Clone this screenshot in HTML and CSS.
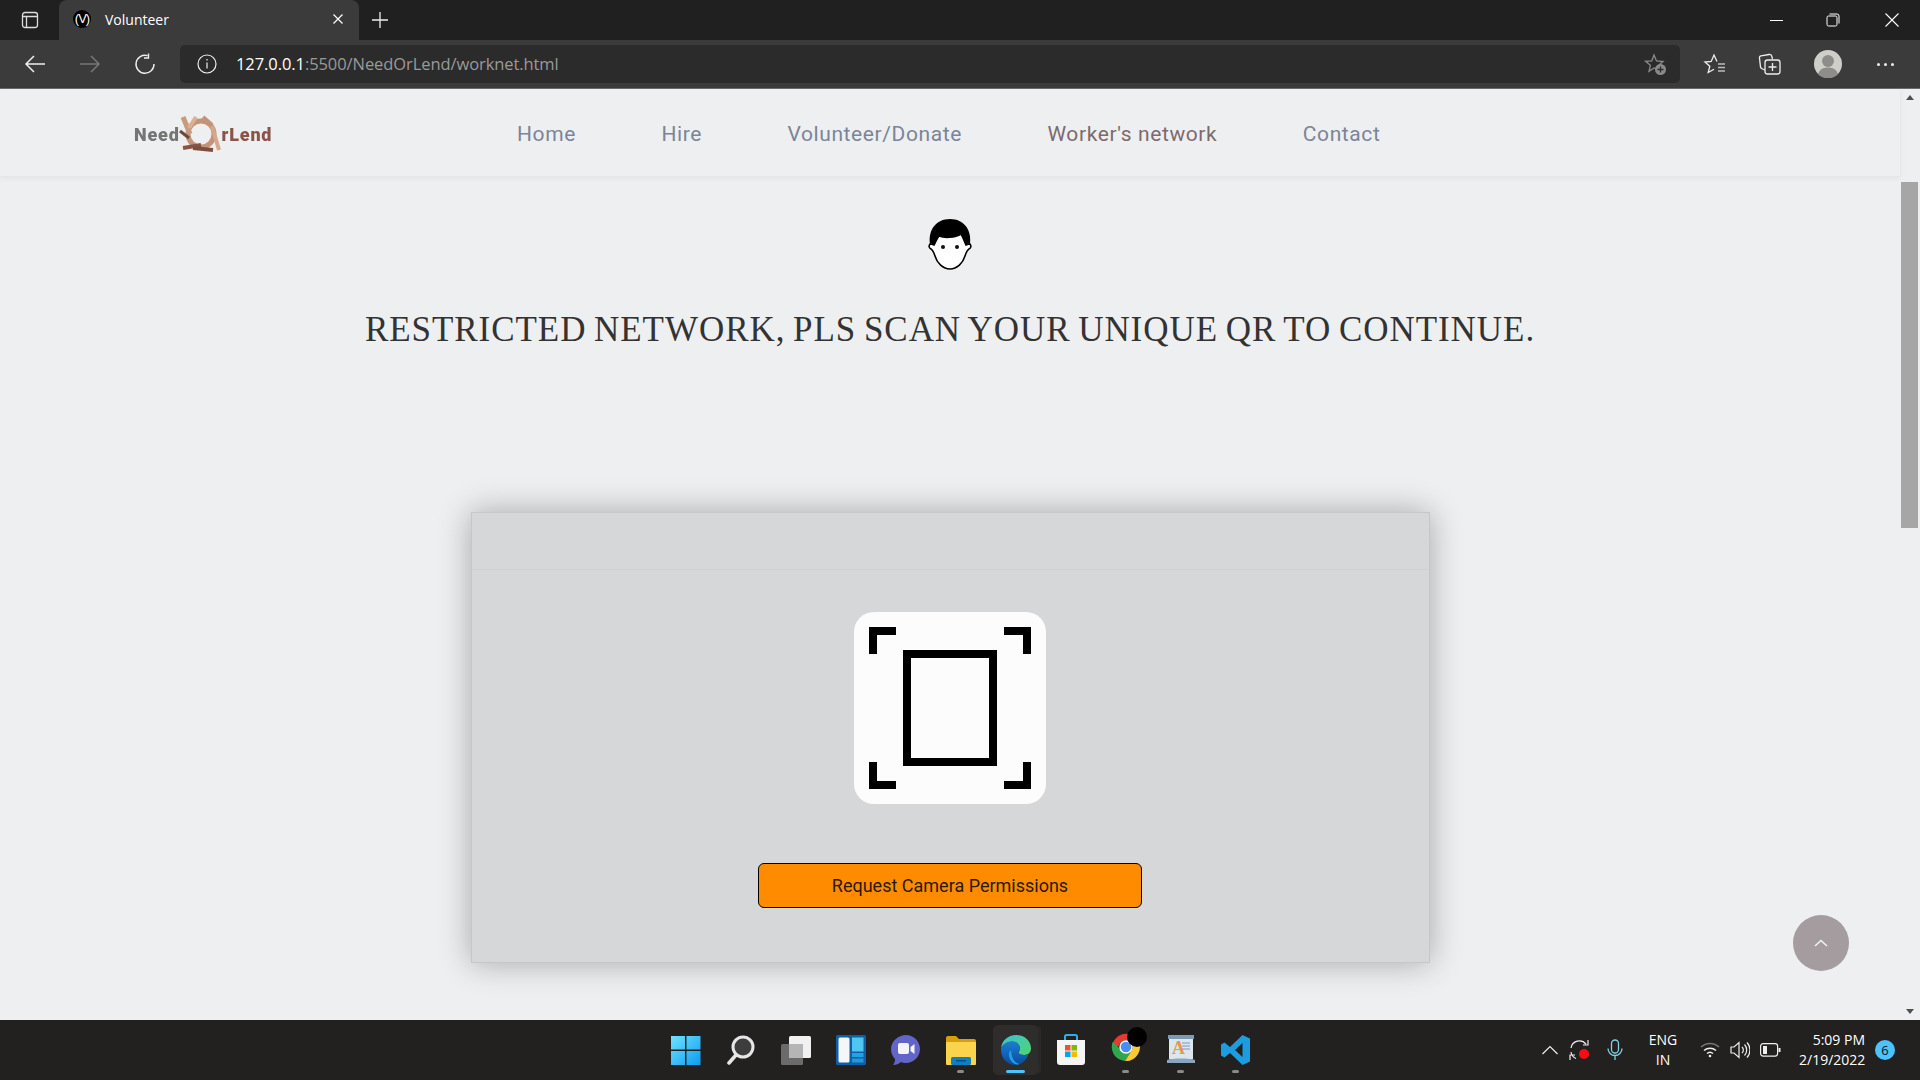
FILE: index.html
```html
<!DOCTYPE html>
<html lang="en">
<head>
  <meta charset="UTF-8">
  <title>Volunteer</title>
  <link rel="stylesheet" href="styles.css">
</head>
<body>

<!-- browser frame -->
<div class="tabstrip">
  <div class="tab-side">
    <svg width="18" height="18" viewBox="0 0 18 18" fill="none" stroke="#ddd" stroke-width="1.3"><rect x="1.5" y="1.5" width="15" height="15" rx="2.5"/><path d="M1.5 5.5h15M5.5 5.5v11"/></svg>
  </div>
  <div class="tab">
    <span class="favicon">(V)</span>
    <span class="tab-title">Volunteer</span>
    <svg class="tab-close" width="12" height="12" viewBox="0 0 12 12" stroke="#fff" stroke-width="1.2"><path d="M1.5 1.5l9 9M10.5 1.5l-9 9"/></svg>
  </div>
  <div class="tab-new">
    <svg width="18" height="18" viewBox="0 0 18 18" stroke="#eee" stroke-width="1.3"><path d="M9 1v16M1 9h16"/></svg>
  </div>
  <div class="win-controls">
    <svg width="14" height="14" viewBox="0 0 14 14" stroke="#fff" stroke-width="1"><path d="M0 7.5h13"/></svg>
    <svg width="14" height="14" viewBox="0 0 14 14" fill="none" stroke="#fff" stroke-width="1"><rect x="1" y="3" width="10" height="10" rx="1.5"/><path d="M3.5 1h7.5a2 2 0 0 1 2 2v7.5"/></svg>
    <svg width="14" height="14" viewBox="0 0 14 14" stroke="#fff" stroke-width="1.1"><path d="M.5.5l13 13M13.500.5l-13 13"/></svg>
  </div>
</div>

<div class="toolbar">
  <div class="tool-btn"><svg width="22" height="20" viewBox="0 0 22 20" fill="none" stroke="#eee" stroke-width="1.5"><path d="M21 10H2M10 2l-8 8 8 8"/></svg></div>
  <div class="tool-btn"><svg width="22" height="20" viewBox="0 0 22 20" fill="none" stroke="#777" stroke-width="1.5"><path d="M1 10h19M12 2l8 8-8 8"/></svg></div>
  <div class="tool-btn"><svg width="22" height="22" viewBox="0 0 22 22" fill="none" stroke="#eee" stroke-width="1.4"><path d="M13.500 2.600A9 9 0 1 0 20 11M14.500 .5v4.500h-4.500"/></svg></div>
  <div class="address">
    <svg class="info" width="20" height="20" viewBox="0 0 20 20" fill="none" stroke="#eee" stroke-width="1.2"><circle cx="10" cy="10" r="9"/><path d="M10 8.500v6M10 5v1.600"/></svg>
    <span class="url"><b>127.0.0.1</b>:5500/NeedOrLend/worknet.html</span>
    <svg class="fav-add" width="24" height="24" viewBox="0 0 24 24"><path d="M11 3l2.500 6 6.500.5-4.900 4.200 1.300 5-5.400-2.700-5 3.300 1.400-6-4.900-4 6.300-.5z" fill="none" stroke="#8a8a8a" stroke-width="1.3"/><circle cx="17.500" cy="17.500" r="5.500" fill="#8a8a8a"/><path d="M17.500 14.500v6M14.500 17.500h6" stroke="#2b2b2b" stroke-width="1.3"/></svg>
  </div>
  <div class="tool-btn tool-favs"><svg width="24" height="24" viewBox="0 0 24 24" fill="none" stroke="#eee" stroke-width="1.3"><path d="M14 9.500L11 3 8.200 9.500 2 10l4.800 4.200-1.600 6.300 5.800-3.300"/><path d="M15 12h7M15 15.500h7M15 19h7" stroke="#bbb"/></svg></div>
  <div class="tool-btn"><svg width="24" height="24" viewBox="0 0 24 24" fill="none" stroke="#eee" stroke-width="1.3"><path d="M7 18l-2.500-1c-1-.4-1.700-1-2-2L1.500 6c-.2-1 .3-2 1.500-2.200L11 2.500c1.500-.2 2.300.4 2.700 1.500l.8 3"/><rect x="7" y="8" width="15" height="14" rx="2.500"/><path d="M14.500 11v8M10.500 15h8"/></svg></div>
  <div class="tool-btn tool-profile">
    <svg width="28" height="28" viewBox="0 0 28 28"><circle cx="14" cy="14" r="14" fill="#cfcfca"/><circle cx="14" cy="11" r="6" fill="#8f8d8a"/><path d="M4 24c1.500-4.500 5-6.500 10-6.500s8.500 2 10 6.500a14 14 0 0 1-20 0z" fill="#8f8d8a"/></svg>
  </div>
  <div class="tool-btn tool-more"><i></i><i></i><i></i></div>
</div>

<div class="viewport">
  <div class="page">
    <header class="nav">
      <div class="logo">
        <span class="logo-need">Need</span>
        <svg class="logo-ring" width="46" height="40" viewBox="0 0 46 40" fill="none">
          <circle cx="22" cy="20" r="13" stroke="#c49478" stroke-width="5"/>
          <path d="M4 3l7 17" stroke="#c99a7c" stroke-width="5"/>
          <path d="M1 17l9 7" stroke="#6d4a3a" stroke-width="3"/>
          <path d="M17 3l-7 11" stroke="#d9b296" stroke-width="4"/>
          <path d="M24 3l9 8" stroke="#c49478" stroke-width="4"/>
          <path d="M33 12l7 24" stroke="#d3a88c" stroke-width="4"/>
          <path d="M4 34l18-3" stroke="#8a5443" stroke-width="4"/>
          <path d="M14 34l20 2" stroke="#7e4f40" stroke-width="4"/>
        </svg>
        <span class="logo-lend">rLend</span>
      </div>
      <nav class="nav-links">
        <a>Home</a>
        <a>Hire</a>
        <a>Volunteer/Donate</a>
        <a class="current">Worker's network</a>
        <a>Contact</a>
      </nav>
    </header>

    <svg class="face" width="46" height="52" viewBox="1 0 44 52">
      <path d="M4 31c-2-1-2.500-3-1-5 2 0 3 .5 4 1 2-3 3-7 5-9 5 2 16 2 22-2 2 3 3 7 5 11 1-.5 2-1 4-1 1.500 2 1 4-1 5-2 1-3 4-4 7-2 7-8 13-15 13S10 45 8 38c-1-3-2-6-4-7z" fill="#fff" stroke="#000" stroke-width="1.600"/>
      <path d="M3 26C1 12 9 1 23 1s22 11 20 25c-2-.5-3 0-4 1-2-4-3-8-5-11-6 4-17 4-22 2-2 2-3 6-5 9-1-.5-2-1.500-4-1z" fill="#000"/>
      <circle cx="16" cy="29" r="2" fill="#111"/><circle cx="30" cy="29" r="2" fill="#111"/>
    </svg>

    <h2 class="notice">RESTRICTED NETWORK, PLS SCAN YOUR UNIQUE QR TO CONTINUE.</h2>

    <section class="scanner">
      <div class="scanner-head"></div>
      <div class="scanner-body">
        <div class="scan-tile">
          <svg width="192" height="192" viewBox="0 0 192 192" fill="none" stroke="#000" stroke-width="8">
            <path d="M19 42V19h23M150 19h23v23M19 150v23h23M150 173h23v-23"/>
            <rect x="53" y="42" width="86" height="108"/>
          </svg>
        </div>
        <button class="scan-btn">Request Camera Permissions</button>
      </div>
    </section>

    <div class="to-top">
      <svg width="14" height="8" viewBox="0 0 14 8" fill="none" stroke="#eef1f5" stroke-width="1.600"><path d="M1 7l6-5.500L13 7"/></svg>
    </div>
  </div>

  <div class="scrollbar">
    <div class="arrow arrow-up"></div>
    <div class="thumb"></div>
    <div class="arrow arrow-down"></div>
  </div>
</div>

<!-- windows taskbar -->
<footer class="taskbar">
  <div class="task-icons">
    <div class="task-item">
      <svg width="30" height="30" viewBox="0 0 30 30"><defs><linearGradient id="win" x1="0" y1="0" x2="1" y2="1"><stop offset="0" stop-color="#6fe3ff"/><stop offset="1" stop-color="#0c9bf0"/></linearGradient></defs><path d="M0 1h14v13.500H0zM15.500 1H29.500v13.500H15.500zM0 16h14v14H0zM15.500 16H29.500v14H15.500z" fill="url(#win)"/></svg>
    </div>
    <div class="task-item">
      <svg width="30" height="30" viewBox="0 0 30 30" fill="none"><circle cx="17" cy="12" r="10" fill="#3d3d3d" stroke="#e6e6e6" stroke-width="3"/><path d="M10 20l-7 8" stroke="#e6e6e6" stroke-width="3.500" stroke-linecap="round"/></svg>
    </div>
    <div class="task-item">
      <svg width="30" height="30" viewBox="0 0 30 30"><rect x="8" y="1" width="22" height="22" rx="1.500" fill="#f1f1f1"/><rect x="0" y="9" width="22" height="21" rx="1.500" fill="#6b6b6b"/><rect x="8" y="9" width="14" height="14" fill="#b5b5b5"/></svg>
    </div>
    <div class="task-item">
      <svg width="30" height="30" viewBox="0 0 30 30"><rect width="30" height="30" rx="1.500" fill="#0e5fa8"/><rect x="2.500" y="2.500" width="11" height="25" rx="1.500" fill="#f4f6f8"/><rect x="16" y="2.500" width="11.500" height="14" fill="#4fc6f0"/><rect x="16" y="18" width="11.500" height="4" fill="#22a4e2"/><rect x="16" y="23.500" width="11.500" height="4" fill="#1f9ad8"/></svg>
    </div>
    <div class="task-item">
      <svg width="30" height="32" viewBox="0 0 30 32"><path d="M15 1c8 0 14 6.500 14 14S23 29 15 29c-2 0-3.500-.3-5-1-2 2-5 3-8 3 1.500-2 2.200-4 2-6-2.500-2.500-4-6-4-10C0 7.500 7 1 15 1z" fill="#6264c7"/><rect x="7" y="9" width="11" height="11" rx="2" fill="#f4f3fb"/><path d="M19.500 13l4-3v10l-4-3z" fill="#f4f3fb"/></svg>
    </div>
    <div class="task-item has-dot">
      <svg width="30" height="30" viewBox="0 0 30 30"><path d="M0 3a2 2 0 0 1 2-2h8l3 3h15a2 2 0 0 1 2 2v3H0z" fill="#d99d0d"/><path d="M0 7h30v22a1 1 0 0 1-1 1H1a1 1 0 0 1-1-1z" fill="#fbd44e"/><rect x="5" y="22" width="20" height="8" rx="1.500" fill="#0f7fc4"/><rect x="10" y="25" width="10" height="1.500" fill="#0a4f80"/></svg>
    </div>
    <div class="task-item is-active">
      <svg width="30" height="30" viewBox="0 0 30 30"><defs><linearGradient id="edgeA" x1="0" y1="0" x2="1" y2="1"><stop offset="0" stop-color="#39c5d6"/><stop offset="1" stop-color="#52d36a"/></linearGradient><linearGradient id="edgeB" x1="0" y1="0" x2="0" y2="1"><stop offset="0" stop-color="#1b7fd4"/><stop offset="1" stop-color="#0a4a9c"/></linearGradient></defs><path d="M15 0c9 0 15 6 15 13.500 0 4.500-3.500 6.500-7 6.500-3 0-5.500-1-5.500-2.500 0-1 1.500-1.500 1.500-4C19 9.500 15.500 6.500 11 6.500 6 6.500 2 9.500 0 13 1 5.500 7 0 15 0z" fill="url(#edgeA)"/><path d="M0 13c2-3.500 6-6.500 11-6.500 4.500 0 8 3 8 7 0 2.500-1.500 3-1.500 4 0 1.500 2.500 2.500 5.500 2.500 1.500 0 3-.3 4.500-1-2 6-7 11-13 11C6 30 0 23 0 15z" fill="url(#edgeB)"/><path d="M10 15c-3 2-3 8 1 12 2 2 5 3 8 2-5-1-8-4-9-14z" fill="#1e9fe0"/></svg>
    </div>
    <div class="task-item">
      <svg width="30" height="32" viewBox="0 0 30 32"><path d="M9 6V2.500A1.500 1.500 0 0 1 10.500 1h9A1.500 1.500 0 0 1 21 2.500V6" fill="none" stroke="#2ab0e8" stroke-width="2"/><path d="M1 6h28v22a3 3 0 0 1-3 3H4a3 3 0 0 1-3-3z" fill="#f5f5f5"/><rect x="9" y="11" width="5.500" height="5.500" fill="#f25022"/><rect x="15.500" y="11" width="5.500" height="5.500" fill="#7fba00"/><rect x="9" y="17.500" width="5.500" height="5.500" fill="#00a4ef"/><rect x="15.500" y="17.500" width="5.500" height="5.500" fill="#ffb900"/></svg>
    </div>
    <div class="task-item has-dot">
      <svg class="chrome" width="36" height="38" viewBox="0 0 36 38"><path d="M1 21A14 14 0 0 1 27 13.500H15A7 7 0 0 0 8 19z" fill="#e33b2e"/><path d="M1.900 14.500A14 14 0 0 0 14 34l6-9.500A7 7 0 0 1 9 22z" fill="#2fa74b"/><path d="M14 34A14 14 0 0 0 27 13H15a7 7 0 0 1 5 11.500z" fill="#fcc934"/><circle cx="15" cy="20" r="6" fill="#4c8bf5" stroke="#fff" stroke-width="1.500"/><circle cx="26" cy="10" r="10" fill="#000"/></svg>
    </div>
    <div class="task-item has-dot">
      <svg width="30" height="30" viewBox="0 0 30 30"><path d="M3 1h24v23H3z" fill="#dce6ee"/><rect x="2" y="0" width="26" height="4" fill="#7a9ab5"/><path d="M1 25c4-2 24-2 28 0v3H1z" fill="#8aa5bd"/><text class="note-letter" x="6" y="19">A</text><path d="M16 8h8M16 11h8M16 14h8" stroke="#7a9ab5" stroke-width="1.200"/></svg>
    </div>
    <div class="task-item has-dot">
      <svg width="30" height="30" viewBox="0 0 30 30"><path d="M21.500 0L29 3.500v23L21.500 30 9 18l-5.500 4.500L0 20.500v-11L3.500 7.500 9 12zM21.500 8l-7.500 7 7.500 7z" fill="#1f9be0" fill-rule="evenodd"/></svg>
    </div>
  </div>

  <div class="tray">
    <svg class="tray-chevron" width="16" height="10" viewBox="0 0 16 10" fill="none" stroke="#eee" stroke-width="1.200"><path d="M.5 9L8 1.500 15.500 9"/></svg>
    <svg class="tray-sync" width="22" height="24" viewBox="0 0 22 24" fill="none" stroke="#eee" stroke-width="1.200"><path d="M2 10A8.500 8.500 0 0 1 17 6M19 2v5h-5M2 14a8.500 8.500 0 0 0 5 6.500M1 22v-5h5"/><circle cx="15" cy="16" r="5" fill="#ff0a14" stroke="none"/></svg>
    <svg class="tray-mic" width="16" height="22" viewBox="0 0 16 22" fill="none" stroke="#84cfe6" stroke-width="1.300"><rect x="4.500" y="1" width="7" height="13" rx="3.500"/><path d="M1 9.500a7 7 0 0 0 14 0M8 16.500V21"/></svg>
    <div class="tray-lang">ENG<br>IN</div>
    <svg class="tray-wifi" width="20" height="16" viewBox="0 0 20 16" fill="none" stroke="#eee" stroke-width="1.500"><path d="M1 5a13 13 0 0 1 18 0" stroke="#777"/><path d="M4 8.500a9 9 0 0 1 12 0M7 11.500a4.500 4.500 0 0 1 6 0"/><circle cx="10" cy="14" r="1.300" fill="#eee" stroke="none"/></svg>
    <svg class="tray-sound" width="20" height="18" viewBox="0 0 20 18" fill="none" stroke="#eee" stroke-width="1.200"><path d="M1 6v6h3l5 4.500v-15L4 6zM12 6a4 4 0 0 1 0 6M14.500 3.500a8 8 0 0 1 0 11M17 1.500a11 11 0 0 1 0 15"/></svg>
    <svg class="tray-battery" width="21" height="14" viewBox="0 0 21 14" fill="none" stroke="#eee" stroke-width="1.200"><rect x=".6" y=".6" width="17" height="12.500" rx="2.500"/><rect x="3" y="3" width="4" height="8" fill="#eee" stroke="none"/><path d="M19.500 5v4" stroke-width="2"/></svg>
    <div class="tray-clock">5:09 PM<br>2/19/2022</div>
    <div class="tray-badge">6</div>
  </div>
</footer>

</body>
</html>
```

FILE: styles.css
```css
* {
  box-sizing: border-box;
}

html, body {
  margin: 0;
  height: 1080px;
  overflow: hidden;
}

body {
  display: flex;
  flex-direction: column;
  font-family: "Open Sans", sans-serif;
  background: #eeeff1;
}

/* browser frame */
.tabstrip {
  height: 40px;
  background: #202020;
  display: flex;
  align-items: flex-end;
  flex: none;
}

.tab-side {
  width: 59px;
  height: 40px;
  display: flex;
  align-items: center;
  padding-left: 21px;
}

.tab {
  width: 300px;
  height: 40px;
  background: #3b3b3b;
  border-radius: 8px 8px 0 0;
  display: flex;
  align-items: center;
  padding: 0 0 2px 14px;
  color: #fff;
}

.favicon {
  width: 18px;
  height: 18px;
  border-radius: 50%;
  background: #000;
  color: #fff;
  font: 13px/18px "Liberation Sans", sans-serif;
  text-align: center;
  letter-spacing: -1px;
}

.tab-title {
  margin-left: 14px;
  font-size: 14px;
  flex: 1;
}

.tab-close {
  margin-right: 15px;
}

.tab-new {
  height: 40px;
  display: flex;
  align-items: center;
  padding-left: 12px;
}

.win-controls {
  height: 40px;
  margin-left: auto;
  display: flex;
  align-items: center;
  gap: 42px;
  padding-right: 21px;
}

.win-controls svg:last-child {
  margin-left: 3px;
}

.toolbar {
  height: 49px;
  background: #3b3b3b;
  border-bottom: 1px solid #6b6b6b;
  display: flex;
  align-items: center;
  padding-left: 7.5px;
  flex: none;
}

.tool-btn {
  width: 55px;
  height: 36px;
  display: flex;
  align-items: center;
  justify-content: center;
  flex: none;
}

.address {
  width: 1500px;
  height: 38px;
  margin-left: 7.5px;
  background: #2b2b2b;
  border-radius: 5px;
  display: flex;
  align-items: center;
  padding-left: 17px;
  flex: none;
}

.url {
  margin: 0 0 2px 19px;
  font-size: 16.5px;
  color: #9a9a9a;
  letter-spacing: -0.08px;
}

.url b {
  font-weight: 400;
  color: #fff;
}

.fav-add {
  margin-left: auto;
  margin-right: 13px;
}

.tool-favs {
  margin-left: 7.500px;
}

.tool-profile {
  width: 60px;
}

.tool-more {
  gap: 4px;
}

.tool-more i {
  width: 3px;
  height: 3px;
  border-radius: 50%;
  background: #eee;
}

/* page */
.viewport {
  flex: 1;
  display: flex;
  min-height: 0;
}

.page {
  flex: 1;
  position: relative;
  display: flex;
  flex-direction: column;
  align-items: center;
  background: #eeeff1;
  min-width: 0;
}

.nav {
  width: 100%;
  height: 88px;
  display: flex;
  align-items: center;
  padding: 3px 0 0 134px;
  border-bottom: 1px solid #e6e7e9;
  box-shadow: 0 1px 6px rgba(0, 0, 0, 0.06);
}

.logo {
  width: 141px;
  flex: none;
  display: flex;
  align-items: center;
  font: 900 18px "Roboto", sans-serif;
  letter-spacing: 0.8px;
  filter: blur(0.5px);
}

.logo-need {
  color: #757575;
}

.logo-lend {
  color: #8a5549;
}

.logo-ring {
  margin: 0 -3px 0 -1px;
  flex: none;
}

.nav-links {
  display: flex;
  gap: 85.5px;
  margin-left: 242px;
  font: 21px "Roboto", sans-serif;
  letter-spacing: 0.6px;
  color: #7a8599;
}

.nav-links .current {
  color: #7d6a6c;
}

.face {
  margin-top: 41px;
}

.notice {
  margin: 40px 0 0;
  font: 400 35px "Liberation Serif", serif;
  letter-spacing: 0.95px;
  word-spacing: -2px;
  color: #333;
  white-space: nowrap;
}

.scanner {
  margin-top: 162px;
  width: 959px;
  height: 451px;
  background: #d6d7d9;
  border: 1px solid #c6c7c9;
  box-shadow: 0 0 30px rgba(0, 0, 0, 0.3);
}

.scanner-head {
  height: 57px;
  border-bottom: 1px solid #d0d1d3;
}

.scanner-body {
  display: flex;
  flex-direction: column;
  align-items: center;
  padding-top: 42px;
}

.scan-tile {
  width: 192px;
  height: 192px;
  background: #fcfcfc;
  border-radius: 20px;
}

.scan-btn {
  margin-top: 59px;
  width: 384px;
  height: 45px;
  background: #ff8c00;
  border: 1px solid #000;
  border-radius: 6px;
  color: #2a1a00;
  font: 18px "Roboto", sans-serif;
}

.to-top {
  position: absolute;
  left: 1793px;
  top: 826px;
  width: 56px;
  height: 56px;
  border-radius: 50%;
  background: #a59ca0;
  display: flex;
  align-items: center;
  justify-content: center;
}

.scrollbar {
  width: 20px;
  flex: none;
  display: flex;
  flex-direction: column;
  padding-left: 1px;
  background: #eeeff1;
}

.arrow {
  height: 17px;
  width: 17px;
  flex: none;
  display: flex;
}

.arrow-up::before,
.arrow-down::before {
  content: "";
  margin: auto;
  border-left: 4.500px solid transparent;
  border-right: 4.500px solid transparent;
}

.arrow-up::before {
  border-bottom: 5px solid #505050;
}

.arrow-down::before {
  border-top: 5px solid #505050;
}

.thumb {
  width: 17px;
  height: 346px;
  margin-top: 76px;
  margin-bottom: auto;
  background: #a6a6a6;
}

/* taskbar */
.taskbar {
  height: 60px;
  background: #232020;
  position: relative;
  flex: none;
  display: flex;
  align-items: center;
  justify-content: center;
  color: #fff;
}

.task-icons {
  display: flex;
  align-items: center;
  padding-left: 1px;
}

.task-item {
  width: 55px;
  height: 56px;
  display: flex;
  align-items: center;
  justify-content: center;
  position: relative;
}

.task-item.is-active {
  width: 45px;
  height: 50px;
  margin: 0 5px;
  background: #2f2c2c;
  border-radius: 5px;
  box-shadow: 4px 0 0 -1px #2a2828;
}

.has-dot::after {
  content: "";
  position: absolute;
  bottom: 5px;
  left: 24px;
  width: 7px;
  height: 3px;
  border-radius: 2px;
  background: #8a8a8a;
}

.is-active::after {
  content: "";
  position: absolute;
  bottom: 2px;
  left: 13px;
  width: 19px;
  height: 3px;
  border-radius: 2px;
  background: #4cc2ff;
}

.chrome {
  margin: -8px -6px 0 0;
}

.note-letter {
  font: bold 18px "Liberation Serif", serif;
  fill: #e8964a;
}

.tray {
  position: absolute;
  right: 0;
  top: 0;
  height: 60px;
  display: flex;
  align-items: center;
  padding-right: 25px;
  font-size: 14px;
}

.tray-chevron { margin-right: 11px; }
.tray-sync { margin-right: 16px; }
.tray-mic { margin-right: 20px; }

.tray-lang {
  width: 40px;
  text-align: center;
  line-height: 20px;
  margin-right: 17px;
}

.tray-sound { margin: 0 9.5px 0 10px; }
.tray-battery { margin-right: 18.5px; }

.tray-clock {
  width: 66px;
  text-align: right;
  line-height: 20px;
  white-space: nowrap;
}

.tray-badge {
  width: 20px;
  height: 20px;
  margin-left: 10px;
  border-radius: 50%;
  background: #4cc2ff;
  color: #111;
  font-size: 13px;
  line-height: 20px;
  text-align: center;
}
```
